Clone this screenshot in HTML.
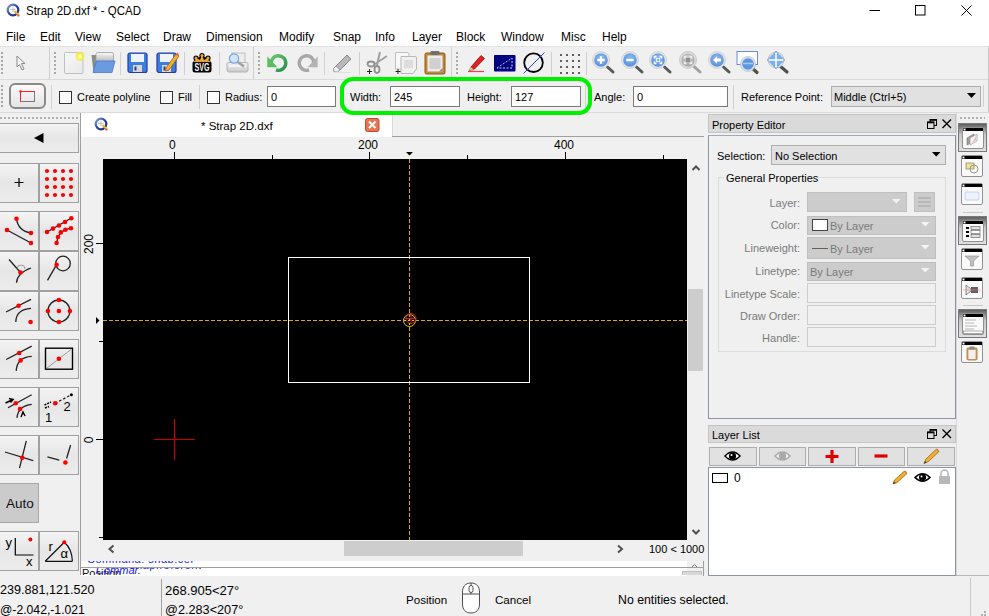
<!DOCTYPE html>
<html><head><meta charset="utf-8">
<style>
*{margin:0;padding:0;box-sizing:border-box}
html,body{width:989px;height:616px;overflow:hidden;background:#f0f0f0;font-family:"Liberation Sans",sans-serif;font-size:11px;color:#000}
.a{position:absolute}
.t{position:absolute;white-space:nowrap;line-height:1}
svg{position:absolute;overflow:visible}
.vs{position:absolute;width:1px;background:#d0d0d0}
.hd{position:absolute;width:2px;background-image:linear-gradient(#a8a8a8 2px,transparent 2px);background-size:2px 4px}
.inp{position:absolute;background:#fff;border:1px solid #7a7a7a}
.btn{position:absolute;border:1px solid #a0a0a0;background:linear-gradient(#f4f4f4,#e6e6e6 50%,#ededed)}
.lbl{position:absolute;white-space:nowrap;line-height:1;color:#7a7a7a;text-align:right}
.combo{position:absolute;background:#cccccc;border:1px solid #bfbfbf}
.fld{position:absolute;background:#f0f0f0;border:1px solid #cdcdcd}
</style></head><body>

<!-- Title bar -->
<div class="a" style="left:0;top:0;width:989px;height:46px;background:#fff"></div>
<svg style="left:6px;top:3px" width="14" height="14" viewBox="0 0 14 14">
 <defs><linearGradient id="qg" x1="0" y1="0" x2="1" y2="1"><stop offset="0" stop-color="#8aa0d0"/><stop offset="0.5" stop-color="#2a44a0"/><stop offset="1" stop-color="#1a2a80"/></linearGradient></defs>
 <circle cx="7" cy="7" r="5.3" fill="#fbfbfd" stroke="url(#qg)" stroke-width="2.2"/>
 <path d="M7 3.5 V9 M4 6.5 H9.5" stroke="#b8b8c0" stroke-width="0.8"/>
 <path d="M8.5 8 L12 11.5" stroke="#f0b020" stroke-width="2"/>
 <circle cx="12.4" cy="12.4" r="1.2" fill="#e06030"/>
</svg>
<div class="t" style="left:26px;top:4.5px;font-size:12.5px;transform:scaleX(0.92);transform-origin:0 0">Strap 2D.dxf * - QCAD</div>
<svg style="left:869px;top:9px" width="12" height="3"><path d="M0.5 1.5H11" stroke="#000" stroke-width="1"/></svg>
<svg style="left:915px;top:5px" width="11" height="11"><rect x="0.5" y="0.5" width="9.5" height="9.5" fill="none" stroke="#000" stroke-width="1"/></svg>
<svg style="left:961px;top:5px" width="11" height="11"><path d="M0.5 0.5L10.5 10.5M10.5 0.5L0.5 10.5" stroke="#000" stroke-width="1"/></svg>

<!-- Menu -->
<div class="t" style="left:6px;top:31px;font-size:12px">File</div>
<div class="t" style="left:40px;top:31px;font-size:12px">Edit</div>
<div class="t" style="left:75px;top:31px;font-size:12px">View</div>
<div class="t" style="left:116px;top:31px;font-size:12px">Select</div>
<div class="t" style="left:163px;top:31px;font-size:12px">Draw</div>
<div class="t" style="left:206px;top:31px;font-size:12px">Dimension</div>
<div class="t" style="left:279px;top:31px;font-size:12px">Modify</div>
<div class="t" style="left:333px;top:31px;font-size:12px">Snap</div>
<div class="t" style="left:375px;top:31px;font-size:12px">Info</div>
<div class="t" style="left:412px;top:31px;font-size:12px">Layer</div>
<div class="t" style="left:456px;top:31px;font-size:12px">Block</div>
<div class="t" style="left:501px;top:31px;font-size:12px">Window</div>
<div class="t" style="left:561px;top:31px;font-size:12px">Misc</div>
<div class="t" style="left:602px;top:31px;font-size:12px">Help</div>

<!-- Toolbar area -->
<div class="a" style="left:0;top:46px;width:989px;height:1px;background:#e3e3e3"></div>
<div class="a" style="left:0;top:79px;width:989px;height:1px;background:#dadada"></div>
<div class="a" style="left:0;top:112px;width:989px;height:1px;background:#dadada"></div>

<!-- TB1 handles & separators -->
<div class="hd" style="left:1px;top:52px;height:24px"></div>
<div class="a" style="left:49px;top:47px;width:1px;height:32px;background:#cfcfcf"></div>
<div class="hd" style="left:54px;top:52px;height:24px"></div>
<div class="vs" style="left:120px;top:52px;height:23px"></div>
<div class="vs" style="left:184px;top:52px;height:23px"></div>
<div class="vs" style="left:219px;top:52px;height:23px"></div>
<div class="a" style="left:253px;top:47px;width:1px;height:32px;background:#cfcfcf"></div>
<div class="hd" style="left:258px;top:52px;height:24px"></div>
<div class="vs" style="left:324px;top:52px;height:23px"></div>
<div class="vs" style="left:359px;top:52px;height:23px"></div>
<div class="a" style="left:451px;top:47px;width:1px;height:32px;background:#cfcfcf"></div>
<div class="hd" style="left:456px;top:52px;height:24px"></div>
<div class="vs" style="left:551px;top:52px;height:23px"></div>
<div class="vs" style="left:586px;top:52px;height:23px"></div>

<!-- pointer -->
<svg style="left:16px;top:55px" width="11" height="16" viewBox="0 0 11 16"><path d="M1 1 L1 12 L3.5 9.5 L6 15 L8 14 L5.5 8.5 L9 8.5 Z" fill="#f4f4f4" stroke="#8a8a8a" stroke-width="1"/></svg>
<!-- new -->
<svg style="left:63px;top:51px" width="24" height="24" viewBox="0 0 24 24">
 <defs><linearGradient id="npg" x1="0" y1="0" x2="1" y2="1"><stop offset="0" stop-color="#f8f8f8"/><stop offset="1" stop-color="#e8e8e8"/></linearGradient></defs>
 <rect x="1.5" y="1.5" width="18.5" height="21" rx="1" fill="url(#npg)" stroke="#c0c0c0"/>
 <circle cx="17" cy="5.5" r="4.5" fill="#f0f040" opacity="0.9"/><circle cx="17" cy="5.5" r="2" fill="#ffffb0"/>
</svg>
<!-- open -->
<svg style="left:90px;top:51px" width="26" height="23" viewBox="0 0 26 23">
 <defs><linearGradient id="fpg" x1="0" y1="0" x2="0" y2="1"><stop offset="0" stop-color="#fafafa"/><stop offset="1" stop-color="#b0b0b0"/></linearGradient></defs>
 <path d="M1.5 4 H7 V21.5 H3.5 Z" fill="#8a8a8a"/>
 <rect x="6" y="1.5" width="17.5" height="10" rx="1.5" fill="url(#fpg)" stroke="#a0a0a0" stroke-width="0.8"/>
 <path d="M6.5 10 H25 L22 21.5 H3 Z" fill="#6a9ae0" stroke="#4a7ad0" stroke-width="0.8"/>
</svg>
<!-- save -->
<svg style="left:127px;top:52px" width="22" height="22" viewBox="0 0 22 22">
 <rect x="1" y="1" width="19" height="19.5" rx="2" fill="#3c7ee0" stroke="#2a3aa0" stroke-width="1.2"/>
 <rect x="4" y="2" width="13" height="8" fill="#eef2fa"/>
 <rect x="6" y="13" width="9" height="7" fill="#d8d8d8"/><rect x="7.5" y="14.5" width="2" height="4" fill="#2a3aa0"/>
</svg>
<!-- save as -->
<svg style="left:156px;top:51px" width="24" height="23" viewBox="0 0 24 23">
 <rect x="1" y="2" width="19" height="19.5" rx="2" fill="#3c7ee0" stroke="#2a3aa0" stroke-width="1.2"/>
 <rect x="4" y="3" width="13" height="8" fill="#eef2fa"/>
 <rect x="6" y="14" width="9" height="7" fill="#d8d8d8"/><rect x="7.5" y="15.5" width="2" height="4" fill="#2a3aa0"/>
 <path d="M10 17 L20 3 L23 5 L13 19 L9.5 20 Z" fill="#f0b030" stroke="#a06010" stroke-width="0.8"/>
 <path d="M20 3 L23 5 L22 1.5 Z" fill="#e05050"/>
</svg>
<!-- svg -->
<svg style="left:192px;top:53px" width="20" height="20" viewBox="0 0 20 20">
 <g fill="#000"><circle cx="10" cy="2.6" r="2.6"/><circle cx="4" cy="5" r="2.6"/><circle cx="16" cy="5" r="2.6"/><path d="M1.5 8 L5 5 L10 3 L15 5 L18.5 8 Z"/></g>
 <g fill="#f4a830"><circle cx="10" cy="2.6" r="1.5"/><circle cx="4" cy="5" r="1.5"/><circle cx="16" cy="5" r="1.5"/><path d="M3 8.2 L4 5 L8 7 L10 2.6 L12 7 L16 5 L17 8.2 Z"/></g>
 <rect x="0.5" y="8" width="19" height="11.5" rx="2.5" fill="#000"/>
 <path d="M2 8.6 H18" stroke="#f4a830" stroke-width="1"/>
 <text x="10" y="17.8" fill="#f4f4f4" font-family="Liberation Sans" font-weight="bold" font-size="10" text-anchor="middle" textLength="15" lengthAdjust="spacingAndGlyphs">SVG</text>
</svg>
<!-- print preview -->
<svg style="left:226px;top:52px" width="23" height="21" viewBox="0 0 23 21">
 <defs><linearGradient id="ppg" x1="0" y1="0" x2="0" y2="1"><stop offset="0" stop-color="#f4f4f4"/><stop offset="1" stop-color="#c8c8c8"/></linearGradient></defs>
 <rect x="6" y="1" width="13" height="11" fill="#ececec" stroke="#c0c0c0"/>
 <path d="M1 12 Q1 10.5 3 10.5 L20 10.5 Q22 10.5 22 12 L22 18 Q22 20 20 20 L3 20 Q1 20 1 18 Z" fill="url(#ppg)" stroke="#b4b4b4"/>
 <path d="M3 14 H20" stroke="#f8f8f8" stroke-width="1.5"/>
 <path d="M11 9.5 L18 14.5" stroke="#a0a0a0" stroke-width="2.4"/>
 <circle cx="8" cy="6.5" r="4.6" fill="#d4e4f8" stroke="#7aa4dc" stroke-width="1.2"/>
</svg>
<!-- undo -->
<svg style="left:266px;top:53px" width="24" height="20" viewBox="0 0 24 20">
 <defs><linearGradient id="ug" x1="0" y1="0" x2="1" y2="1"><stop offset="0" stop-color="#6cc870"/><stop offset="1" stop-color="#20904a"/></linearGradient></defs>
 <path d="M5.6 12.5 A7.3 7.3 0 1 1 10 16.9" fill="none" stroke="url(#ug)" stroke-width="3.4"/>
 <path d="M1.3 3.5 V14.3 H11.5 Z" fill="#5cbc60"/>
</svg>
<!-- redo -->
<svg style="left:295px;top:53px" width="24" height="20" viewBox="0 0 24 20">
 <path d="M18.4 12.5 A7.3 7.3 0 1 0 14 16.9" fill="none" stroke="#a8a8a8" stroke-width="3.4"/>
 <path d="M22.7 3.5 V14.3 H12.5 Z" fill="#b4b4b4"/>
</svg>
<!-- eraser grey -->
<svg style="left:332px;top:53px" width="21" height="20" viewBox="0 0 21 20">
 <path d="M4 13 L15 2 L19 6 L8 17 Z" fill="#b8b8b8" stroke="#8a8a8a"/>
 <path d="M1.5 15.5 L4 13 L8 17 L5.5 19 L2 19 Z" fill="#f0f0f0" stroke="#9a9a9a"/>
 <path d="M2 19.5 L19 19.5" stroke="#e0e0e0"/>
</svg>
<!-- scissors -->
<svg style="left:366px;top:51px" width="23" height="23" viewBox="0 0 23 23">
 <path d="M11 14 L14 1 M9 13 L21 5" stroke="#a0a0a0" stroke-width="2" fill="none"/>
 <ellipse cx="5" cy="13" rx="3.5" ry="2.5" fill="none" stroke="#909090" stroke-width="1.8"/>
 <ellipse cx="11" cy="18.5" rx="2.5" ry="3.5" fill="none" stroke="#909090" stroke-width="1.8"/>
 <path d="M1 20.5 H6 M3.5 18 V23" stroke="#222" stroke-width="1"/>
</svg>
<!-- copy -->
<svg style="left:394px;top:51px" width="24" height="24" viewBox="0 0 24 24">
 <path d="M1.5 1.5 H14 L15 3 V18 H1.5 Z" fill="#f8f8f8" stroke="#c0c0c0"/>
 <path d="M7 5.5 H21 Q22.5 5.5 22.5 7 V18 L19 22.5 H7 Z" fill="#f0f0f0" stroke="#b8b8b8"/>
 <rect x="10" y="9" width="9" height="8" fill="#dcdcdc"/>
 <path d="M1.5 20.5 H6.5 M4 18 V23" stroke="#222" stroke-width="1"/>
</svg>
<!-- paste -->
<svg style="left:424px;top:50px" width="22" height="25" viewBox="0 0 22 25">
 <rect x="1" y="3" width="20" height="21" rx="1.5" fill="#c08838" stroke="#8a5a18"/>
 <rect x="3.5" y="5.5" width="15" height="16" fill="#ececec"/>
 <rect x="5.5" y="8" width="11" height="11" fill="#d0d0d0"/>
 <rect x="6.5" y="1" width="9" height="4" rx="1" fill="#707070"/>
 <path d="M15 21.5 L18.5 18 V21.5 Z" fill="#888"/>
</svg>
<!-- red pencil -->
<svg style="left:466px;top:53px" width="20" height="20" viewBox="0 0 20 20">
 <path d="M5 14 L15 2.5 L18.5 5.5 L8 16.5 Z" fill="#e02020" stroke="#901010" stroke-width="0.8"/>
 <path d="M5 14 L8 16.5 L3 18 Z" fill="#f0d0a0" stroke="#806040" stroke-width="0.6"/>
 <path d="M2 18.5 H18" stroke="#f04040" stroke-width="1.2"/>
</svg>
<!-- navy rect -->
<svg style="left:494px;top:55px" width="22" height="17" viewBox="0 0 22 17">
 <rect x="0" y="0" width="21.5" height="16.5" rx="1" fill="#000080"/>
 <path d="M3 13 L18 3 L18 13 Z" fill="none" stroke="#c8d0f0" stroke-width="1" stroke-dasharray="2 1.5"/>
</svg>
<!-- circle -->
<svg style="left:522px;top:52px" width="24" height="22" viewBox="0 0 24 22">
 <circle cx="11.5" cy="10.7" r="9.3" fill="none" stroke="#000" stroke-width="1.8"/>
 <path d="M1.5 21.5 L22.5 0.5" stroke="#3a3af0" stroke-width="1"/>
</svg>
<!-- grid dots -->
<svg style="left:559px;top:53px" width="21" height="21" viewBox="0 0 21 21">
 <g fill="#606060">
 <rect x="1" y="1" width="2" height="2"/><rect x="7" y="1" width="2" height="2"/><rect x="13" y="1" width="2" height="2"/><rect x="19" y="1" width="2" height="2"/>
 <rect x="1" y="7" width="2" height="2"/><rect x="7" y="7" width="2" height="2"/><rect x="13" y="7" width="2" height="2"/><rect x="19" y="7" width="2" height="2"/>
 <rect x="1" y="13" width="2" height="2"/><rect x="7" y="13" width="2" height="2"/><rect x="13" y="13" width="2" height="2"/><rect x="19" y="13" width="2" height="2"/>
 <rect x="1" y="19" width="2" height="2"/><rect x="7" y="19" width="2" height="2"/><rect x="13" y="19" width="2" height="2"/><rect x="19" y="19" width="2" height="2"/>
 </g>
</svg>
<svg style="left:592px;top:51px" width="24" height="23" viewBox="0 0 24 23">
 <defs><radialGradient id="lg601" cx="0.5" cy="0.35" r="0.6"><stop offset="0" stop-color="#8cb8f0"/><stop offset="1" stop-color="#5a94e0"/></radialGradient></defs>
 <path d="M15.5 16 L21 21" stroke="#585858" stroke-width="3" stroke-linecap="round"/>
 <circle cx="9" cy="9" r="8.5" fill="#e4e4e4" stroke="#c4c4c4" stroke-width="0.6"/>
 <circle cx="9" cy="9" r="6.8" fill="url(#lg601)"/>
 <path d="M9 5.2 V12.8 M5.2 9 H12.8" stroke="#fff" stroke-width="2.4"/>
</svg>
<svg style="left:621px;top:51px" width="24" height="23" viewBox="0 0 24 23">
 <defs><radialGradient id="lg630" cx="0.5" cy="0.35" r="0.6"><stop offset="0" stop-color="#8cb8f0"/><stop offset="1" stop-color="#5a94e0"/></radialGradient></defs>
 <path d="M15.5 16 L21 21" stroke="#585858" stroke-width="3" stroke-linecap="round"/>
 <circle cx="9" cy="9" r="8.5" fill="#e4e4e4" stroke="#c4c4c4" stroke-width="0.6"/>
 <circle cx="9" cy="9" r="6.8" fill="url(#lg630)"/>
 <path d="M5.2 9 H12.8" stroke="#fff" stroke-width="2.4"/>
</svg>
<svg style="left:649px;top:51px" width="24" height="23" viewBox="0 0 24 23">
 <defs><radialGradient id="lg658" cx="0.5" cy="0.35" r="0.6"><stop offset="0" stop-color="#8cb8f0"/><stop offset="1" stop-color="#5a94e0"/></radialGradient></defs>
 <path d="M15.5 16 L21 21" stroke="#585858" stroke-width="3" stroke-linecap="round"/>
 <circle cx="9" cy="9" r="8.5" fill="#e4e4e4" stroke="#c4c4c4" stroke-width="0.6"/>
 <circle cx="9" cy="9" r="6.8" fill="url(#lg658)"/>
 <path d="M5.5 7.5 V5.5 H7.5 M10.5 5.5 H12.5 V7.5 M12.5 10.5 V12.5 H10.5 M7.5 12.5 H5.5 V10.5" stroke="#fff" stroke-width="1.6" fill="none"/><rect x="7.3" y="7.3" width="3.4" height="3.4" fill="none" stroke="#fff" stroke-width="0.8"/>
</svg>
<svg style="left:679px;top:51px" width="24" height="23" viewBox="0 0 24 23">
 <defs><radialGradient id="lg688" cx="0.5" cy="0.35" r="0.6"><stop offset="0" stop-color="#d0d0d0"/><stop offset="1" stop-color="#a8a8a8"/></radialGradient></defs>
 <path d="M15.5 16 L21 21" stroke="#a0a0a0" stroke-width="3" stroke-linecap="round"/>
 <circle cx="9" cy="9" r="8.5" fill="#dcdcdc" stroke="#b0b8c4" stroke-width="0.6"/>
 <circle cx="9" cy="9" r="6.6" fill="url(#lg688)"/>
 <path d="M5.5 7.5 V5.5 H7.5 M10.5 5.5 H12.5 V7.5 M12.5 10.5 V12.5 H10.5 M7.5 12.5 H5.5 V10.5" stroke="#f0f0f0" stroke-width="1.6" fill="none"/><rect x="7" y="7" width="4" height="4" fill="#909090"/>
</svg>
<svg style="left:708px;top:51px" width="24" height="23" viewBox="0 0 24 23">
 <defs><radialGradient id="lg717" cx="0.5" cy="0.35" r="0.6"><stop offset="0" stop-color="#8cb8f0"/><stop offset="1" stop-color="#5a94e0"/></radialGradient></defs>
 <path d="M15.5 16 L21 21" stroke="#585858" stroke-width="3" stroke-linecap="round"/>
 <circle cx="9" cy="9" r="8.5" fill="#e4e4e4" stroke="#c4c4c4" stroke-width="0.6"/>
 <circle cx="9" cy="9" r="6.8" fill="url(#lg717)"/>
 <path d="M5 9 L9 5.3 V7.6 H13 V10.4 H9 V12.7 Z" fill="#fff"/>
</svg>
<!-- zoom window -->
<svg style="left:736px;top:51px" width="24" height="24" viewBox="0 0 24 24">
 <rect x="1" y="0.5" width="20.5" height="13" fill="#fff" stroke="#6a8ed8"/>
 <path d="M16 17 L21 21.5" stroke="#505050" stroke-width="3.2" stroke-linecap="round"/>
 <circle cx="12" cy="13" r="7.5" fill="#d8e0ea" stroke="#b0b8c4" stroke-width="0.6"/><circle cx="12" cy="13" r="5.8" fill="#5a98e0"/>
 <path d="M7 12.5 H17" stroke="#a8c8f0" stroke-width="1.5"/>
</svg>
<!-- pan -->
<svg style="left:766px;top:50px" width="24" height="24" viewBox="0 0 24 24">
 <path d="M14 16 L21 22" stroke="#505050" stroke-width="3.2" stroke-linecap="round"/>
 <circle cx="10" cy="10" r="8" fill="#d8e0ea" stroke="#b0b8c4" stroke-width="0.6"/><circle cx="10" cy="10" r="6.3" fill="#7ab0ee"/>
 <path d="M10 1 L13 4.5 H7 Z M10 19 L13 15.5 H7 Z M1 10 L4.5 7 V13 Z M19 10 L15.5 7 V13 Z" fill="#a8c8f0" stroke="#6a98d8" stroke-width="0.6"/>
 <path d="M10 3 V17 M3 10 H17" stroke="#fff" stroke-width="1.5"/>
</svg>

<div class="hd" style="left:1px;top:85px;height:24px"></div>
<div class="a" style="left:9px;top:83px;width:37px;height:26px;border:2px solid #8a8a8a;border-radius:6px;background:linear-gradient(#fafafa,#e4e4e4)"></div>
<svg style="left:19px;top:90px" width="17" height="13" viewBox="0 0 17 13"><rect x="1.5" y="1.5" width="14" height="10" fill="none" stroke="#7a7a7a" stroke-width="1"/><path d="M1.5 11.5 V1.5 H15.5" fill="none" stroke="#ff2020" stroke-width="1"/><circle cx="1.5" cy="1.5" r="1.3" fill="#ff2020"/></svg>
<div class="vs" style="left:51px;top:85px;height:24px"></div>
<div class="a" style="left:59px;top:91px;width:13px;height:13px;border:1px solid #333;background:#fff"></div>
<div class="t" style="left:77px;top:92px;font-size:11px">Create polyline</div>
<div class="a" style="left:160px;top:91px;width:13px;height:13px;border:1px solid #333;background:#fff"></div>
<div class="t" style="left:178px;top:92px;font-size:11px">Fill</div>
<div class="vs" style="left:199px;top:85px;height:24px"></div>
<div class="a" style="left:207px;top:91px;width:13px;height:13px;border:1px solid #333;background:#fff"></div>
<div class="t" style="left:225px;top:92px;font-size:11px">Radius:</div>
<div class="inp" style="left:267px;top:86px;width:69px;height:21px"></div>
<div class="t" style="left:271px;top:92px;font-size:11px">0</div>
<div class="vs" style="left:340px;top:85px;height:24px"></div>
<div class="t" style="left:350px;top:92px;font-size:11px">Width:</div>
<div class="inp" style="left:390px;top:86px;width:70px;height:21px"></div>
<div class="t" style="left:394px;top:92px;font-size:11px">245</div>
<div class="t" style="left:467px;top:92px;font-size:11px">Height:</div>
<div class="inp" style="left:511px;top:86px;width:70px;height:21px"></div>
<div class="t" style="left:515px;top:92px;font-size:11px">127</div>
<div class="vs" style="left:585px;top:85px;height:24px"></div>
<div class="t" style="left:594px;top:92px;font-size:11px">Angle:</div>
<div class="inp" style="left:633px;top:86px;width:95px;height:21px"></div>
<div class="t" style="left:637px;top:92px;font-size:11px">0</div>
<div class="vs" style="left:733px;top:85px;height:24px"></div>
<div class="t" style="left:741px;top:92px;font-size:11px">Reference Point:</div>
<div class="a" style="left:831px;top:86px;width:150px;height:21px;border:1px solid #adadad;background:#e1e1e1"></div>
<div class="t" style="left:834px;top:92px;font-size:11px">Middle (Ctrl+5)</div>
<svg style="left:967px;top:93px" width="9" height="6"><path d="M0 0 H9 L4.5 5 Z" fill="#000"/></svg>
<div class="a" style="left:988px;top:46px;width:1px;height:66px;background:#c8c8c8"></div>
<div class="vs" style="left:983px;top:85px;height:22px"></div>
<!-- green highlight -->


<!-- LEFT DOCK -->
<div class="a" style="left:0;top:117px;width:78px;height:2px;background-image:linear-gradient(90deg,#b0b0b0 2px,transparent 2px);background-size:4px 2px"></div>
<div class="btn" style="left:-1px;top:123px;width:80px;height:30px"></div>
<svg style="left:34px;top:133px" width="10" height="10"><path d="M0 5 L9.5 0 V10 Z" fill="#000"/></svg>
<div class="a" style="left:80px;top:113px;width:1px;height:462px;background:#a0a0a0"></div>
<div class="btn" style="left:-1px;top:163px;width:40px;height:40px"></div>
<div class="btn" style="left:39px;top:163px;width:40px;height:40px"></div>
<div class="btn" style="left:-1px;top:211px;width:40px;height:40px"></div>
<div class="btn" style="left:39px;top:211px;width:40px;height:40px"></div>
<div class="btn" style="left:-1px;top:251px;width:40px;height:40px"></div>
<div class="btn" style="left:39px;top:251px;width:40px;height:40px"></div>
<div class="btn" style="left:-1px;top:291px;width:40px;height:40px"></div>
<div class="btn" style="left:39px;top:291px;width:40px;height:40px"></div>
<div class="btn" style="left:-1px;top:339px;width:40px;height:40px"></div>
<div class="btn" style="left:39px;top:339px;width:40px;height:40px"></div>
<div class="btn" style="left:-1px;top:387px;width:40px;height:40px"></div>
<div class="btn" style="left:39px;top:387px;width:40px;height:40px"></div>
<div class="btn" style="left:-1px;top:435px;width:40px;height:40px"></div>
<div class="btn" style="left:39px;top:435px;width:40px;height:40px"></div>
<div class="btn" style="left:-1px;top:531px;width:40px;height:40px"></div>
<div class="btn" style="left:39px;top:531px;width:40px;height:40px"></div>
<div class="a" style="left:-1px;top:483px;width:40px;height:40px;border:1px solid #a8a8a8;background:#cbcbcb"></div>
<div class="t" style="left:6px;top:497px;font-size:13.5px;color:#111">Auto</div>
<svg style="left:0px;top:163px" width="39" height="39" viewBox="0 0 39 39"><path d="M14.5 19.5 H23.5 M19 15 V24" stroke="#000" stroke-width="1.2"/></svg>
<svg style="left:39px;top:163px" width="39" height="39" viewBox="0 0 39 39"><circle cx="8" cy="8" r="2.1" fill="#ff0000"/><circle cx="8" cy="16" r="2.1" fill="#ff0000"/><circle cx="8" cy="24" r="2.1" fill="#ff0000"/><circle cx="8" cy="32" r="2.1" fill="#ff0000"/><circle cx="16" cy="8" r="2.1" fill="#ff0000"/><circle cx="16" cy="16" r="2.1" fill="#ff0000"/><circle cx="16" cy="24" r="2.1" fill="#ff0000"/><circle cx="16" cy="32" r="2.1" fill="#ff0000"/><circle cx="24" cy="8" r="2.1" fill="#ff0000"/><circle cx="24" cy="16" r="2.1" fill="#ff0000"/><circle cx="24" cy="24" r="2.1" fill="#ff0000"/><circle cx="24" cy="32" r="2.1" fill="#ff0000"/><circle cx="32" cy="8" r="2.1" fill="#ff0000"/><circle cx="32" cy="16" r="2.1" fill="#ff0000"/><circle cx="32" cy="24" r="2.1" fill="#ff0000"/><circle cx="32" cy="32" r="2.1" fill="#ff0000"/></svg>
<svg style="left:0px;top:211px" width="39" height="39" viewBox="0 0 39 39"><path d="M7 19 L31 32 M16.5 7.7 Q18 20 31 22" fill="none" stroke="#222" stroke-width="1.3"/><circle cx="7" cy="19" r="2.3" fill="#ff0000"/><circle cx="31" cy="32" r="2.3" fill="#ff0000"/><circle cx="16.5" cy="7.7" r="2.3" fill="#ff0000"/><circle cx="31" cy="22" r="2.3" fill="#ff0000"/></svg>
<svg style="left:39px;top:211px" width="39" height="39" viewBox="0 0 39 39"><path d="M8 21 L32 7.3 M17.6 32 L19 26 L22 21.4 L26.4 18.7 L32 17.2" fill="none" stroke="#222" stroke-width="1.3"/><circle cx="8" cy="21" r="2.3" fill="#ff0000"/><circle cx="14" cy="17.6" r="2.3" fill="#ff0000"/><circle cx="20" cy="14.5" r="2.3" fill="#ff0000"/><circle cx="26" cy="11" r="2.3" fill="#ff0000"/><circle cx="32.3" cy="7.3" r="2.3" fill="#ff0000"/><circle cx="17.6" cy="32" r="2.3" fill="#ff0000"/><circle cx="19" cy="26" r="2.3" fill="#ff0000"/><circle cx="21.8" cy="21.4" r="2.3" fill="#ff0000"/><circle cx="26.4" cy="18.7" r="2.3" fill="#ff0000"/><circle cx="32" cy="17.2" r="2.3" fill="#ff0000"/></svg>
<svg style="left:0px;top:251px" width="39" height="39" viewBox="0 0 39 39"><path d="M9 8.5 L20.5 21.5 M16.5 31.7 Q17 22 31 17" fill="none" stroke="#222" stroke-width="1.3"/><path d="M17 18 A4 4 0 0 1 25 18" fill="none" stroke="#888" stroke-width="0.8"/><circle cx="20.5" cy="21.5" r="2.3" fill="#ff0000"/></svg>
<svg style="left:39px;top:251px" width="39" height="39" viewBox="0 0 39 39"><path d="M8.5 29.3 L17.6 13.7" fill="none" stroke="#222" stroke-width="1.3"/><circle cx="24" cy="12.5" r="7.3" fill="none" stroke="#222" stroke-width="1.3"/><circle cx="17.6" cy="13.7" r="2.3" fill="#ff0000"/></svg>
<svg style="left:0px;top:291px" width="39" height="39" viewBox="0 0 39 39"><path d="M6 21 L31 8.3 M15.8 31 Q16 18.5 31 17.4" fill="none" stroke="#222" stroke-width="1.3"/><circle cx="18.6" cy="14.7" r="2.3" fill="#ff0000"/><circle cx="30.6" cy="31" r="2.3" fill="#ff0000"/></svg>
<svg style="left:39px;top:291px" width="39" height="39" viewBox="0 0 39 39"><circle cx="19.9" cy="20" r="11" fill="none" stroke="#222" stroke-width="1.3"/><circle cx="19.9" cy="20" r="2.3" fill="#ff0000"/><circle cx="19.9" cy="9" r="2.3" fill="#ff0000"/><circle cx="19.9" cy="31" r="2.3" fill="#ff0000"/><circle cx="8.9" cy="20" r="2.3" fill="#ff0000"/><circle cx="30.9" cy="20" r="2.3" fill="#ff0000"/></svg>
<svg style="left:0px;top:339px" width="39" height="39" viewBox="0 0 39 39"><path d="M6.2 20.5 L31.7 7.2 M16.2 31.9 Q17 18 31.7 17.3" fill="none" stroke="#222" stroke-width="1.3"/><circle cx="19.2" cy="14" r="2.3" fill="#ff0000"/><circle cx="20.6" cy="21.4" r="2.3" fill="#ff0000"/></svg>
<svg style="left:39px;top:339px" width="39" height="39" viewBox="0 0 39 39"><rect x="6.5" y="9.2" width="27" height="21" fill="none" stroke="#000" stroke-width="1.4"/><path d="M8 29 L32 10.5" stroke="#888" stroke-width="0.8"/><circle cx="19.9" cy="19.8" r="2.3" fill="#ff0000"/></svg>
<svg style="left:0px;top:387px" width="39" height="39" viewBox="0 0 39 39"><path d="M8 20.7 L31.7 7.8 M17 30.9 Q18 19 31.7 17.4" fill="none" stroke="#222" stroke-width="1.3"/><path d="M5.5 16 L12 13 M9 11.5 L13 12.5 L10.5 15.5" fill="none" stroke="#000" stroke-width="1.6"/><path d="M21 30 L23 25 L25 29" fill="none" stroke="#000" stroke-width="1.4"/><circle cx="15.7" cy="16.3" r="2.3" fill="#ff0000"/><circle cx="20" cy="22" r="2.3" fill="#ff0000"/></svg>
<svg style="left:39px;top:387px" width="39" height="39" viewBox="0 0 39 39"><path d="M16.2 16.3 L32.4 7.7" fill="none" stroke="#222" stroke-width="1.3" stroke-dasharray="2.5 2"/><circle cx="32.4" cy="7.7" r="1.5" fill="#000"/><path d="M5.5 18 L12 15 M6 21 L10 19.5" stroke="#000" stroke-width="1.5" stroke-dasharray="2 1"/><text x="6" y="34.5" font-family="Liberation Sans" font-size="13" fill="#000">1</text><text x="24.5" y="23.5" font-family="Liberation Sans" font-size="13" fill="#000">2</text><circle cx="16.2" cy="16.3" r="2.3" fill="#ff0000"/></svg>
<svg style="left:0px;top:435px" width="39" height="39" viewBox="0 0 39 39"><path d="M4.9 17 L33.3 25.6 M26.3 5.9 L19.5 33.2" fill="none" stroke="#222" stroke-width="1.3"/><circle cx="22.2" cy="22.7" r="2.3" fill="#ff0000"/></svg>
<svg style="left:39px;top:435px" width="39" height="39" viewBox="0 0 39 39"><path d="M8.4 21.9 L20.3 25.1 M31.6 10 L27.6 23.5" fill="none" stroke="#222" stroke-width="1.3"/><circle cx="26.4" cy="27.5" r="2.3" fill="#ff0000"/></svg>
<svg style="left:0px;top:531px" width="39" height="39" viewBox="0 0 39 39"><path d="M15.3 6.9 V24 H33.5" fill="none" stroke="#000" stroke-width="1.2"/><text x="5.5" y="15.5" font-family="Liberation Sans" font-size="13" fill="#000">y</text><text x="26" y="34.5" font-family="Liberation Sans" font-size="13" fill="#000">x</text><circle cx="30.4" cy="8.5" r="2" fill="#ff0000"/></svg>
<svg style="left:39px;top:531px" width="39" height="39" viewBox="0 0 39 39"><path d="M6.2 30.3 L25.3 11.3 M6.2 30.3 H33.4 M25.3 11.3 Q33 18 33.4 30.3" fill="none" stroke="#111" stroke-width="1.2"/><text x="9.5" y="19.5" font-family="Liberation Sans" font-size="13" fill="#000">r</text><text x="21.5" y="27" font-family="Liberation Sans" font-size="13" fill="#000">α</text><circle cx="25.3" cy="11.3" r="2" fill="#ff0000"/></svg>

<!-- MDI -->
<div class="a" style="left:81px;top:113px;width:311px;height:24px;background:#fff"></div>
<div class="a" style="left:392px;top:113px;width:1px;height:24px;background:#d8d8d8"></div>
<div class="a" style="left:392px;top:136px;width:312px;height:1px;background:#a0a0a0"></div>
<svg style="left:94px;top:117px" width="14" height="14" viewBox="0 0 14 14">
 <defs><linearGradient id="qg2" x1="0" y1="0" x2="1" y2="1"><stop offset="0" stop-color="#8aa0d0"/><stop offset="0.5" stop-color="#2a44a0"/><stop offset="1" stop-color="#1a2a80"/></linearGradient></defs>
 <circle cx="7" cy="7" r="5.3" fill="#fbfbfd" stroke="url(#qg2)" stroke-width="2.2"/>
 <path d="M7 3.5 V9 M4 6.5 H9.5" stroke="#b8b8c0" stroke-width="0.8"/>
 <path d="M8.5 8 L12 11.5" stroke="#f0b020" stroke-width="2"/>
 <circle cx="12.4" cy="12.4" r="1.2" fill="#e06030"/>
</svg>
<div class="t" style="left:201px;top:121px;font-size:11.5px">* Strap 2D.dxf</div>
<svg style="left:365px;top:118px" width="15" height="14" viewBox="0 0 15 14">
 <rect x="0.5" y="0.5" width="13.5" height="13" rx="2" fill="#e07850" stroke="#d04030"/>
 <path d="M4 3.5 L10.5 10 M10.5 3.5 L4 10" stroke="#fff" stroke-width="2"/>
</svg>
<!-- canvas -->
<div class="a" style="left:103px;top:159px;width:584px;height:381px;background:#000"></div>
<!-- top ruler -->
<div class="t" style="left:169px;top:139px;font-size:12px">0</div>
<div class="t" style="left:358px;top:139px;font-size:12px">200</div>
<div class="t" style="left:554px;top:139px;font-size:12px">400</div>
<div class="a" style="left:174px;top:152px;width:1px;height:7px;background:#000"></div>
<div class="a" style="left:272px;top:155px;width:1px;height:4px;background:#000"></div>
<div class="a" style="left:369px;top:152px;width:1px;height:7px;background:#000"></div>
<div class="a" style="left:467px;top:155px;width:1px;height:4px;background:#000"></div>
<div class="a" style="left:565px;top:152px;width:1px;height:7px;background:#000"></div>
<div class="a" style="left:663px;top:155px;width:1px;height:4px;background:#000"></div>
<svg style="left:406px;top:152px" width="7" height="4"><path d="M0 0 H7 L3.5 3.5 Z" fill="#000"/></svg>
<!-- left ruler -->
<div class="t" style="left:79px;top:238px;font-size:12px;transform:rotate(-90deg);transform-origin:center;width:20px;text-align:center">200</div>
<div class="t" style="left:79px;top:434px;font-size:12px;transform:rotate(-90deg);width:20px;text-align:center">0</div>
<div class="a" style="left:96px;top:243px;width:7px;height:1px;background:#000"></div>
<div class="a" style="left:99px;top:341px;width:4px;height:1px;background:#000"></div>
<div class="a" style="left:96px;top:439px;width:7px;height:1px;background:#000"></div>
<div class="a" style="left:99px;top:537px;width:4px;height:1px;background:#000"></div>
<svg style="left:96px;top:317px" width="4" height="7"><path d="M0 0 V7 L3.5 3.5 Z" fill="#000"/></svg>
<!-- drawing -->
<svg style="left:103px;top:159px" width="584" height="381" viewBox="0 0 584 381">
 <path d="M306.5 0 V381" stroke="#e0a810" stroke-width="1" stroke-dasharray="4 2"/>
 <path d="M0 161.5 H584" stroke="#e0a810" stroke-width="1" stroke-dasharray="4 2"/>
 <rect x="185.5" y="98.5" width="241" height="125" fill="none" stroke="#fff" stroke-width="1"/>
 <circle cx="306.5" cy="161.5" r="6" fill="#000" stroke="#f0c020" stroke-width="1"/>
 <circle cx="308" cy="159.5" r="5" fill="none" stroke="#c02828" stroke-width="1"/>
 <path d="M308 154 V165 M302.5 159.5 H313.5" stroke="#c02828" stroke-width="1"/>
 <path d="M306.5 156 V167 M301 161.5 H312" stroke="#f0c020" stroke-width="1" stroke-dasharray="2 2"/>
 <path d="M51 280.5 H92 M71.5 260 V301" stroke="#cc0000" stroke-width="1.2"/>
</svg>
<!-- scrollbars -->
<div class="a" style="left:688px;top:289px;width:15px;height:82px;background:#cdcdcd"></div>
<svg style="left:692px;top:165px" width="8" height="6"><path d="M0.5 5 L4 1.5 L7.5 5" fill="none" stroke="#505050" stroke-width="2"/></svg>
<svg style="left:692px;top:529px" width="8" height="6"><path d="M0.5 1 L4 4.5 L7.5 1" fill="none" stroke="#505050" stroke-width="2"/></svg>
<div class="a" style="left:344px;top:541px;width:179px;height:15px;background:#cdcdcd"></div>
<svg style="left:108px;top:545px" width="7" height="8"><path d="M5.5 0.5 L1.5 4 L5.5 7.5" fill="none" stroke="#505050" stroke-width="2"/></svg>
<svg style="left:617px;top:545px" width="7" height="8"><path d="M1 0.5 L5 4 L1 7.5" fill="none" stroke="#505050" stroke-width="2"/></svg>
<div class="t" style="left:649px;top:544px;font-size:11px">100 &lt; 1000</div>
<!-- command line -->
<div class="a" style="left:81px;top:561px;width:606px;height:15px;background:#fff"></div><svg style="left:691px;top:564px" width="7" height="4"><path d="M0.5 3.5 L3.5 0.5 L6.5 3.5" fill="none" stroke="#707070" stroke-width="1"/></svg><div class="a" style="left:682px;top:571px;width:20px;height:4px;background:#d8d8d8;border:1px solid #c0c0c0;border-bottom:none"></div>
<div class="a" style="left:81px;top:567px;width:622px;height:1px;background:#a0a0a0"></div>
<div class="a" style="left:703px;top:561px;width:1px;height:15px;background:#a0a0a0"></div>
<div class="a" style="left:82px;top:561px;width:112px;height:2px;overflow:hidden"><div class="t" style="left:5px;top:-7px;font-size:11px;color:#1a1ae0;letter-spacing:0.5px">Commana: snap.center</div></div>
<div class="a" style="left:82px;top:568px;width:119px;height:7px;overflow:hidden"><div class="t" style="left:0px;top:0px;font-size:11px;color:#111">Position</div><div class="t" style="left:14px;top:-3px;font-size:11px;color:#1a1ae0;font-style:italic">Commar.</div><div class="t" style="left:48px;top:-8px;font-size:11px;color:#1a1ae0;letter-spacing:0.5px">snap.reference.point</div></div>
<!-- RIGHT: Property editor -->
<div class="a" style="left:708px;top:114px;width:248px;height:19px;background:#dadada;border:1px solid #c4c4c4"></div>
<div class="t" style="left:712px;top:120px;font-size:11px">Property Editor</div>
<svg style="left:927px;top:119px" width="10" height="10" viewBox="0 0 10 10"><rect x="3" y="0.5" width="6.5" height="6" fill="none" stroke="#000" stroke-width="1"/><rect x="0.5" y="3" width="6.5" height="6.5" fill="#dadada" stroke="#000" stroke-width="1"/><path d="M3 1 H9.5" stroke="#000" stroke-width="1.6"/><path d="M0.5 3.5 H7" stroke="#000" stroke-width="1.6"/></svg>
<svg style="left:942px;top:119px" width="10" height="10"><path d="M0.5 0.5 L9 9 M9 0.5 L0.5 9" stroke="#000" stroke-width="1.4"/></svg>
<div class="a" style="left:708px;top:135px;width:248px;height:284px;border:1px solid #8c94a4;border-top-color:#a0a8b8"></div>
<div class="t" style="left:717px;top:151px;font-size:11px">Selection:</div>
<div class="a" style="left:771px;top:145px;width:175px;height:20px;border:1px solid #adadad;background:#e1e1e1"></div>
<div class="t" style="left:775px;top:151px;font-size:11px">No Selection</div>
<svg style="left:932px;top:152px" width="9" height="6"><path d="M0 0 H8.5 L4.25 4.5 Z" fill="#000"/></svg>
<div class="a" style="left:718px;top:177px;width:228px;height:175px;border:1px solid #dcdcdc"></div>
<div class="a" style="left:724px;top:172px;width:94px;height:10px;background:#f0f0f0"></div>
<div class="t" style="left:726px;top:173px;font-size:11px">General Properties</div>
<div class="lbl" style="left:700px;width:100px;top:198px;font-size:11px">Layer:</div>
<div class="lbl" style="left:700px;width:100px;top:220px;font-size:11px">Color:</div>
<div class="lbl" style="left:700px;width:100px;top:243px;font-size:11px">Lineweight:</div>
<div class="lbl" style="left:700px;width:100px;top:266px;font-size:11px">Linetype:</div>
<div class="lbl" style="left:700px;width:100px;top:289px;font-size:11px">Linetype Scale:</div>
<div class="lbl" style="left:700px;width:100px;top:311px;font-size:11px">Draw Order:</div>
<div class="lbl" style="left:700px;width:100px;top:333px;font-size:11px">Handle:</div>
<div class="combo" style="left:807px;top:192px;width:100px;height:20px"></div>
<svg style="left:892px;top:199px" width="9" height="6"><path d="M0 0 H8.5 L4.25 4.5 Z" fill="#f4f4f4"/></svg>
<div class="combo" style="left:914px;top:192px;width:21px;height:20px"></div>
<svg style="left:918px;top:197px" width="13" height="10"><path d="M0 1 H13 M0 5 H13 M0 9 H13" stroke="#b0b0b0" stroke-width="1.5"/></svg>
<div class="combo" style="left:807px;top:216px;width:129px;height:19px"></div>
<div class="a" style="left:812px;top:219px;width:16px;height:12px;border:1px solid #444;background:#fff"></div>
<div class="t" style="left:830px;top:221px;font-size:11px;color:#7a7a7a">By Layer</div>
<svg style="left:921px;top:222px" width="9" height="6"><path d="M0 0 H8.5 L4.25 4.5 Z" fill="#f4f4f4"/></svg>
<div class="combo" style="left:807px;top:237px;width:129px;height:22px"></div>
<div class="a" style="left:812px;top:248px;width:16px;height:1px;background:#606060"></div>
<div class="t" style="left:830px;top:244px;font-size:11px;color:#7a7a7a">By Layer</div>
<svg style="left:921px;top:245px" width="9" height="6"><path d="M0 0 H8.5 L4.25 4.5 Z" fill="#f4f4f4"/></svg>
<div class="combo" style="left:807px;top:262px;width:129px;height:19px"></div>
<div class="t" style="left:810px;top:267px;font-size:11px;color:#7a7a7a">By Layer</div>
<svg style="left:921px;top:268px" width="9" height="6"><path d="M0 0 H8.5 L4.25 4.5 Z" fill="#f4f4f4"/></svg>
<div class="fld" style="left:807px;top:283px;width:129px;height:20px"></div>
<div class="fld" style="left:807px;top:305px;width:129px;height:20px"></div>
<div class="fld" style="left:807px;top:327px;width:129px;height:20px"></div>

<!-- Layer list -->
<div class="a" style="left:708px;top:425px;width:248px;height:18px;background:#dadada;border:1px solid #c4c4c4"></div>
<div class="t" style="left:712px;top:430px;font-size:11px">Layer List</div>
<svg style="left:927px;top:429px" width="10" height="10" viewBox="0 0 10 10"><rect x="3" y="0.5" width="6.5" height="6" fill="none" stroke="#000" stroke-width="1"/><rect x="0.5" y="3" width="6.5" height="6.5" fill="#dadada" stroke="#000" stroke-width="1"/><path d="M3 1 H9.5" stroke="#000" stroke-width="1.6"/><path d="M0.5 3.5 H7" stroke="#000" stroke-width="1.6"/></svg>
<svg style="left:942px;top:429px" width="10" height="10"><path d="M0.5 0.5 L9 9 M9 0.5 L0.5 9" stroke="#000" stroke-width="1.4"/></svg>
<div class="btn" style="left:709px;top:447px;width:48px;height:19px;background:#e1e1e1;border-color:#adadad"></div>
<div class="btn" style="left:759px;top:447px;width:47px;height:19px;background:#e1e1e1;border-color:#adadad"></div>
<div class="btn" style="left:808px;top:447px;width:48px;height:19px;background:#e1e1e1;border-color:#adadad"></div>
<div class="btn" style="left:858px;top:447px;width:47px;height:19px;background:#e1e1e1;border-color:#adadad"></div>
<div class="btn" style="left:907px;top:447px;width:48px;height:19px;background:#e1e1e1;border-color:#adadad"></div>
<svg style="left:724px;top:449px" width="17" height="14" viewBox="0 0 17 14"><path d="M1 7 Q8.5 -1 16 7 Q8.5 15 1 7 Z" fill="#fff" stroke="#000" stroke-width="1.6"/><circle cx="8.5" cy="7" r="3.6" fill="#000"/><circle cx="7.5" cy="6" r="1" fill="#fff"/></svg>
<svg style="left:774px;top:449px" width="17" height="14" viewBox="0 0 17 14"><path d="M1 7 Q8.5 -1 16 7 Q8.5 15 1 7 Z" fill="#eee" stroke="#a8a8a8" stroke-width="1.6"/><circle cx="8.5" cy="7" r="3.6" fill="#a8a8a8"/></svg>
<svg style="left:824px;top:449px" width="16" height="15"><path d="M8 1 V14 M1.5 7.5 H14.5" stroke="#e00000" stroke-width="3.2"/></svg>
<svg style="left:873px;top:454px" width="16" height="4"><path d="M1.5 2 H14.5" stroke="#e00000" stroke-width="3.2"/></svg>
<svg style="left:922px;top:448px" width="18" height="17" viewBox="0 0 18 17"><path d="M2 15.5 L4 11 L14.5 1 L17 3.5 L6.5 13.5 Z" fill="#f0b030" stroke="#a06010" stroke-width="0.8"/><path d="M14.5 1 L17 3.5 L15.8 1 Z" fill="#e05050"/><path d="M2 15.5 L3 13 L4.5 14.5 Z" fill="#333"/></svg>
<div class="a" style="left:708px;top:467px;width:248px;height:109px;background:#fff;border:1px solid #8c94a4"></div>
<div class="a" style="left:712px;top:473px;width:16px;height:10px;border:1px solid #000;background:#fff"></div>
<div class="t" style="left:734px;top:472px;font-size:12px">0</div>
<svg style="left:892px;top:470px" width="16" height="15" viewBox="0 0 16 15"><path d="M1 14 L2.5 10 L12.5 1 L15 3.5 L5 12.5 Z" fill="#f0b030" stroke="#a06010" stroke-width="0.8"/><path d="M12.5 1 L15 3.5 L14 1 Z" fill="#e05050"/><path d="M1 14 L2 11.5 L3.5 13 Z" fill="#333"/></svg>
<svg style="left:914px;top:471px" width="17" height="13" viewBox="0 0 17 13"><path d="M1 6.5 Q8.5 -1 16 6.5 Q8.5 14 1 6.5 Z" fill="#fff" stroke="#000" stroke-width="1.6"/><circle cx="8.5" cy="6.5" r="3.6" fill="#000"/><circle cx="7.5" cy="5.5" r="1" fill="#fff"/></svg>
<svg style="left:938px;top:469px" width="13" height="16" viewBox="0 0 13 16"><path d="M3 7 V4.5 A3.5 3.5 0 0 1 10 4.5 V7" fill="none" stroke="#b8b8b8" stroke-width="1.6"/><rect x="1" y="7" width="11" height="8" fill="#b8b8b8"/></svg>

<!-- Right toolbar -->
<div class="a" style="left:956px;top:113px;width:1px;height:462px;background:#d8d8d8"></div>
<div class="a" style="left:960px;top:117px;width:25px;height:2px;background-image:linear-gradient(90deg,#b0b0b0 2px,transparent 2px);background-size:4px 2px"></div>
<div class="a" style="left:958px;top:123px;width:29px;height:29px;border:1px solid #7a7a7a;background:linear-gradient(#606060,#c8c8c8 40%,#e0e0e0)"></div><svg style="left:962px;top:127px" width="22" height="22" viewBox="0 0 22 22"><rect x="0.5" y="0.5" width="21" height="21" rx="1.5" fill="#fafafa" stroke="#909090"/><rect x="1" y="1" width="20" height="3" fill="#000"/><rect x="1.5" y="1.5" width="2" height="2" fill="#fff"/><path d="M5 18 V11 L12 7 V14 Z" fill="#a0a0a0" stroke="#707070" stroke-width="0.6"/><path d="M8 18 V11 L15 7 V14 Z" fill="#f4f4f4" stroke="#909090" stroke-width="0.6"/><path d="M10 16 L14 9 V13 Z" fill="#f4b0b0"/></svg><svg style="left:961px;top:155px" width="22" height="22" viewBox="0 0 22 22"><rect x="0.5" y="0.5" width="21" height="21" rx="1.5" fill="#fafafa" stroke="#909090"/><rect x="1" y="1" width="20" height="3" fill="#000"/><rect x="1.5" y="1.5" width="2" height="2" fill="#fff"/><rect x="5" y="8" width="8" height="6" fill="#f0e0a0" stroke="#909070" stroke-width="0.8"/><circle cx="13" cy="14" r="4" fill="none" stroke="#909070" stroke-width="0.9"/></svg><svg style="left:961px;top:183px" width="22" height="22" viewBox="0 0 22 22"><rect x="0.5" y="0.5" width="21" height="21" rx="1.5" fill="#fafafa" stroke="#909090"/><rect x="1" y="1" width="20" height="3" fill="#000"/><rect x="1.5" y="1.5" width="2" height="2" fill="#fff"/><rect x="4" y="9" width="14" height="8" rx="1" fill="#eef2fa" stroke="#b8c8e8" stroke-width="0.8"/></svg><div class="a" style="left:963px;top:212px;width:20px;height:1px;background:#c8c8c8"></div><div class="a" style="left:958px;top:216px;width:29px;height:29px;border:1px solid #7a7a7a;background:linear-gradient(#606060,#c8c8c8 40%,#e0e0e0)"></div><svg style="left:962px;top:220px" width="22" height="22" viewBox="0 0 22 22"><rect x="0.5" y="0.5" width="21" height="21" rx="1.5" fill="#fafafa" stroke="#909090"/><rect x="1" y="1" width="20" height="3" fill="#000"/><rect x="1.5" y="1.5" width="2" height="2" fill="#fff"/><rect x="4" y="7" width="3" height="2" fill="#000"/><rect x="4" y="11" width="3" height="2" fill="#000"/><rect x="4" y="15" width="3" height="2" fill="#000"/><rect x="9" y="6.5" width="9" height="3" fill="#e0e0e0" stroke="#555" stroke-width="0.6"/><rect x="9" y="10.5" width="9" height="3" fill="#fff" stroke="#555" stroke-width="0.6"/><rect x="9" y="14.5" width="9" height="3" fill="#e0e0e0" stroke="#555" stroke-width="0.6"/></svg><svg style="left:961px;top:248px" width="22" height="22" viewBox="0 0 22 22"><rect x="0.5" y="0.5" width="21" height="21" rx="1.5" fill="#fafafa" stroke="#909090"/><rect x="1" y="1" width="20" height="3" fill="#000"/><rect x="1.5" y="1.5" width="2" height="2" fill="#fff"/><path d="M4 8 H18 L12.5 13 V18 L9.5 18 V13 Z" fill="#c0c0c0" stroke="#888" stroke-width="0.6"/></svg><svg style="left:961px;top:277px" width="22" height="22" viewBox="0 0 22 22"><rect x="0.5" y="0.5" width="21" height="21" rx="1.5" fill="#fafafa" stroke="#909090"/><rect x="1" y="1" width="20" height="3" fill="#000"/><rect x="1.5" y="1.5" width="2" height="2" fill="#fff"/><path d="M5 8 V18 L10 14 V12 Z" fill="#e0e0e0" stroke="#666" stroke-width="0.7"/><rect x="10" y="10" width="7" height="6" fill="#606060"/><path d="M2 13 H20" stroke="#f08080" stroke-width="0.6"/></svg><div class="a" style="left:963px;top:305px;width:20px;height:1px;background:#c8c8c8"></div><div class="a" style="left:958px;top:309px;width:29px;height:29px;border:1px solid #7a7a7a;background:linear-gradient(#606060,#c8c8c8 40%,#e0e0e0)"></div><svg style="left:962px;top:313px" width="22" height="22" viewBox="0 0 22 22"><rect x="0.5" y="0.5" width="21" height="21" rx="1.5" fill="#fafafa" stroke="#909090"/><rect x="1" y="1" width="20" height="3" fill="#000"/><rect x="1.5" y="1.5" width="2" height="2" fill="#fff"/><path d="M3 7 H14 M3 10 H12 M3 13 H15 M3 16 H12" stroke="#999" stroke-width="0.7"/><rect x="1.5" y="18" width="19" height="2.5" fill="#fff" stroke="#777" stroke-width="0.6"/></svg><svg style="left:961px;top:341px" width="22" height="22" viewBox="0 0 22 22"><rect x="0.5" y="0.5" width="21" height="21" rx="1.5" fill="#fafafa" stroke="#909090"/><rect x="1" y="1" width="20" height="3" fill="#000"/><rect x="1.5" y="1.5" width="2" height="2" fill="#fff"/><rect x="6" y="7" width="10" height="12" rx="1" fill="#d8a860" stroke="#a07030" stroke-width="0.8"/><rect x="7.5" y="9" width="7" height="9" fill="#f0f0f0"/><rect x="8.5" y="5.5" width="5" height="3" fill="#888"/></svg>
<!-- status bar -->
<div class="t" style="left:0px;top:584px;font-size:12.6px">239.881,121.520</div>
<div class="t" style="left:0px;top:604px;font-size:12.2px">@-2.042,-1.021</div>
<div class="a" style="left:161px;top:579px;width:1px;height:37px;background:#a0a0a0"></div>
<div class="t" style="left:165px;top:584px;font-size:13px">268.905&lt;27°</div>
<div class="t" style="left:165px;top:604px;font-size:12.7px">@2.283&lt;207°</div>
<div class="t" style="left:406px;top:594px;font-size:11.6px">Position</div>
<svg style="left:461px;top:582px" width="20" height="32" viewBox="0 0 20 32"><path d="M10 1 C4 1 1.5 5 1.5 10 V22 C1.5 28 5 31 10 31 C15 31 18.5 28 18.5 22 V10 C18.5 5 16 1 10 1 Z" fill="#fff" stroke="#505050" stroke-width="1"/><path d="M1.5 12 H18.5 M10 1 V12" stroke="#505050" stroke-width="1"/><rect x="8" y="3.5" width="4" height="7" rx="2" fill="#fff" stroke="#505050" stroke-width="1"/></svg>
<div class="t" style="left:495px;top:594px;font-size:11.6px">Cancel</div>
<div class="t" style="left:618px;top:594px;font-size:12.3px">No entities selected.</div>
<div class="a" style="left:970px;top:578px;width:1px;height:38px;background:#c8c8c8"></div><div class="a" style="left:956px;top:575px;width:33px;height:1px;background:#b8b8b8"></div>

<svg style="left:977px;top:607px" width="12" height="12"><g fill="#b0b0b0"><rect x="7" y="4" width="2" height="2"/><rect x="4" y="7" width="2" height="2"/><rect x="7" y="7" width="2" height="2"/></g></svg>
<div class="a" style="left:340px;top:77px;width:252px;height:38px;border:4px solid #00f000;border-radius:13px"></div>
</body></html>
